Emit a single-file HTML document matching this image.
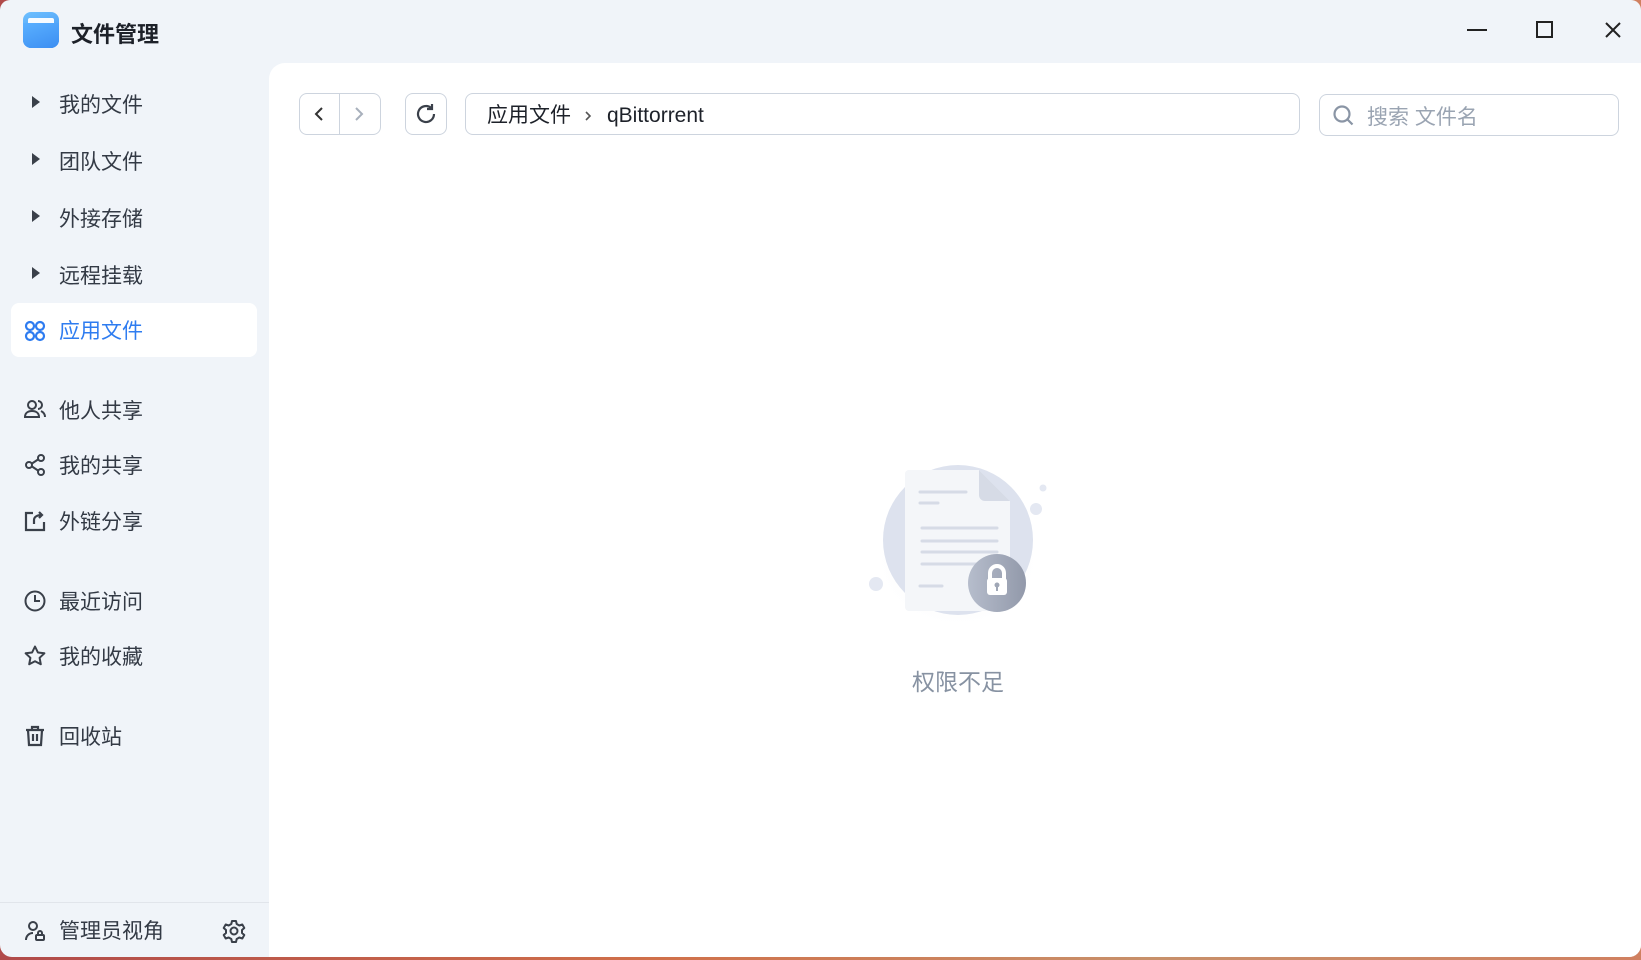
<!DOCTYPE html>
<html><head><meta charset="utf-8"><style>
*{box-sizing:border-box;margin:0;padding:0}
body{width:1641px;height:960px;overflow:hidden;background:linear-gradient(90deg,#b04a4a,#d0704a 40%,#c8906a 70%,#d08060);font-family:"Liberation Sans","Noto Sans CJK SC",sans-serif;position:relative}
.win{position:absolute;left:0;top:0;width:1641px;height:957px;background:#f0f4f9;border-radius:10px 10px 12px 12px;overflow:hidden}
.title{position:absolute;left:71px;top:17px;font-size:22px;font-weight:bold;color:#1d2129}
.logo{position:absolute;left:23px;top:12px;width:36px;height:36px;border-radius:8px;background:linear-gradient(160deg,#6ec0ff,#3d8ef0)}
.logo:before{content:"";position:absolute;left:5px;top:6px;width:26px;height:6px;background:#fff;border-radius:2px 2px 0 0;opacity:.95}
.logo:after{content:"";position:absolute;left:0;top:11px;width:36px;height:25px;border-radius:0 0 8px 8px;background:linear-gradient(160deg,#5ab0ff,#3c8ef2)}
.main{position:absolute;left:269px;top:63px;width:1372px;height:894px;background:#fff;border-radius:16px 0 0 0}
.item{position:absolute;left:59px;font-size:21px;color:#333a45;line-height:24px}
.ic{position:absolute;left:24px;width:22px;height:22px}
.tri{position:absolute;left:32px;width:0;height:0;border-left:8px solid #3a404a;border-top:6px solid transparent;border-bottom:6px solid transparent}
.active{position:absolute;left:11px;top:303px;width:246px;height:54px;background:#fff;border-radius:8px}
.btn{position:absolute;border:1px solid #cdd4de;border-radius:8px;background:#fff}
.wc{position:absolute;top:18px}
</style></head><body>
<div class="win">
<div class="logo"></div>
<div class="title">文件管理</div>
<svg class="wc" style="left:1465px" width="24" height="24"><line x1="2" y1="12" x2="22" y2="12" stroke="#222" stroke-width="2"/></svg>
<svg class="wc" style="left:1533px" width="24" height="24"><rect x="4" y="4" width="15" height="15" fill="none" stroke="#222" stroke-width="2"/></svg>
<svg class="wc" style="left:1601px" width="24" height="24"><path d="M5 5L19 19M19 5L5 19" stroke="#222" stroke-width="2"/></svg>

<div class="tri" style="top:96px"></div><div class="item" style="top:94px">我的文件</div>
<div class="tri" style="top:153px"></div><div class="item" style="top:151px">团队文件</div>
<div class="tri" style="top:210px"></div><div class="item" style="top:208px">外接存储</div>
<div class="tri" style="top:267px"></div><div class="item" style="top:265px">远程挂载</div>
<div class="active"></div>
<svg class="ic" style="top:320px" viewBox="0 0 22 22" fill="none" stroke="#2e7cf0" stroke-width="2.2"><circle cx="6" cy="6" r="4"/><circle cx="16" cy="6" r="4"/><circle cx="6" cy="16" r="4"/><circle cx="16" cy="16" r="4"/></svg>
<div class="item" style="top:320px;color:#2e7cf0">应用文件</div>

<svg class="ic" style="top:398px" viewBox="0 0 22 22" fill="none" stroke="#3a404a" stroke-width="2"><circle cx="8" cy="7" r="4"/><path d="M1 19c0-4 3-6 7-6s7 2 7 6z"/><path d="M14 3a4 4 0 010 8M17 13c2 1 4 3 4 6"/></svg>
<div class="item" style="top:400px">他人共享</div>
<svg class="ic" style="top:454px" viewBox="0 0 22 22" fill="none" stroke="#3a404a" stroke-width="2"><circle cx="17" cy="4" r="3"/><circle cx="5" cy="11" r="3"/><circle cx="17" cy="18" r="3"/><path d="M8 9.5l6-4M8 12.5l6 4"/></svg>
<div class="item" style="top:455px">我的共享</div>
<svg class="ic" style="top:510px" viewBox="0 0 22 22" fill="none" stroke="#3a404a" stroke-width="2.2"><path d="M9 3H2v17h18v-8"/><path d="M10 14l0-4c0-3 3-5 8-5M15 2l3 3-3 3"/></svg>
<div class="item" style="top:511px">外链分享</div>
<svg class="ic" style="top:590px" viewBox="0 0 22 22" fill="none" stroke="#3a404a" stroke-width="2"><circle cx="11" cy="11" r="9.5"/><path d="M11 5v6h5"/></svg>
<div class="item" style="top:591px">最近访问</div>
<svg class="ic" style="top:645px" viewBox="0 0 22 22" fill="none" stroke="#3a404a" stroke-width="2" stroke-linejoin="round"><path d="M11 1.5l2.9 6 6.5.8-4.8 4.5 1.2 6.5L11 16.2l-5.8 3.1 1.2-6.5L1.6 8.3l6.5-.8z"/></svg>
<div class="item" style="top:646px">我的收藏</div>
<svg class="ic" style="top:725px" viewBox="0 0 22 22" fill="none" stroke="#3a404a" stroke-width="2.2"><path d="M2 5h18M8 5V2h6v3M4 5l1 15h12l1-15M9 9v7M13 9v7"/></svg>
<div class="item" style="top:726px">回收站</div>

<div style="position:absolute;left:0;top:902px;width:269px;height:1px;background:#e1e5eb"></div>
<svg class="ic" style="top:920px" viewBox="0 0 22 22" fill="none" stroke="#3a404a" stroke-width="2"><circle cx="9" cy="6" r="4"/><path d="M2 20c0-4 3-7 7-7"/><rect x="12" y="15" width="8" height="5" rx="1"/><path d="M14 15v-2a2 2 0 014 0v2"/></svg>
<div class="item" style="top:920px">管理员视角</div>
<svg style="position:absolute;left:222px;top:919px" width="24" height="24" viewBox="0 0 24 24" fill="none" stroke="#3a404a" stroke-width="2"><circle cx="12" cy="12" r="3.5"/><path d="M10 2h4l.7 3 2.6 1.5 3-1 2 3.5-2.3 2v3l2.3 2-2 3.5-3-1-2.6 1.5-.7 3h-4l-.7-3-2.6-1.5-3 1-2-3.5 2.3-2v-3l-2.3-2 2-3.5 3 1L9.3 5z" stroke-linejoin="round"/></svg>

<div class="main">
<div class="btn" style="left:30px;top:30px;width:82px;height:42px"></div>
<div style="position:absolute;left:70px;top:31px;width:1px;height:40px;background:#cdd4de"></div>
<svg style="position:absolute;left:40px;top:41px" width="20" height="20"><path d="M13 4l-6 6 6 6" fill="none" stroke="#333" stroke-width="2"/></svg>
<svg style="position:absolute;left:80px;top:41px" width="20" height="20"><path d="M7 4l6 6-6 6" fill="none" stroke="#a8b0bc" stroke-width="2"/></svg>
<div class="btn" style="left:136px;top:30px;width:42px;height:42px"></div>
<svg style="position:absolute;left:145px;top:39px" width="24" height="24" viewBox="0 0 24 24" fill="none" stroke="#3a404a" stroke-width="2.2"><path d="M20 12a8 8 0 11-3-6.2"/><path d="M18 2v5h-5"/></svg>
<div class="btn" style="left:196px;top:30px;width:835px;height:42px"></div>
<div style="position:absolute;left:218px;top:32px;height:42px;display:flex;align-items:center;font-size:21px;color:#1d2129;line-height:42px">
<span>应用文件</span>
<svg style="margin:0 12px 0 12px" width="12" height="14"><path d="M3 3l4 4-4 4" fill="none" stroke="#555" stroke-width="1.6"/></svg>
<span>qBittorrent</span></div>
<div class="btn" style="left:1050px;top:31px;width:300px;height:42px"></div>
<svg style="position:absolute;left:1063px;top:41px" width="24" height="24" viewBox="0 0 24 24" fill="none" stroke="#8a95a5" stroke-width="2.2"><circle cx="10" cy="10" r="7.5"/><path d="M15.5 15.5l5 5"/></svg>
<div style="position:absolute;left:1098px;top:34px;height:42px;line-height:42px;font-size:21px;color:#9aa4b2">搜索 文件名</div>

<svg style="position:absolute;left:594px;top:327px" width="190" height="260" viewBox="0 0 190 260">
<defs><linearGradient id="lk" x1="0" x2="1"><stop offset="0" stop-color="#b6bdcc"/><stop offset="1" stop-color="#9299aa"/></linearGradient>
<radialGradient id="sh"><stop offset="0" stop-color="#e6e9ef"/><stop offset="1" stop-color="#fff" stop-opacity="0"/></radialGradient></defs>
<ellipse cx="95" cy="170" rx="85" ry="70" fill="url(#sh)"/>
<circle cx="95" cy="150" r="75" fill="#dde2ee"/>
<circle cx="180" cy="98" r="3.5" fill="#e4e8f2"/>
<circle cx="173" cy="119" r="6" fill="#e4e8f2"/>
<circle cx="13" cy="194" r="7" fill="#e4e8f2"/>
<path d="M46 80h70l31 31v106a4 4 0 01-4 4H46a4 4 0 01-4-4V84a4 4 0 014-4z" fill="#f4f6f9"/>
<path d="M116 80v25a6 6 0 006 6h25z" fill="#d6dbe6"/>
<g stroke="#d6dbe6" stroke-width="3" stroke-linecap="round"><path d="M57 102h46M57 113h18M59 138h75M59 151h75M59 162h75M59 174h60M57 196h22"/></g>
<circle cx="134" cy="193" r="29" fill="url(#lk)"/>
<path d="M127 189v-6a7 7 0 0114 0v6" fill="none" stroke="#fff" stroke-width="4"/>
<rect x="124" y="188" width="20" height="17" rx="3" fill="#fff"/>
<circle cx="134" cy="195" r="2.5" fill="#a0a7b6"/><rect x="133" y="196" width="2" height="5" fill="#a0a7b6"/>
</svg>
<div style="position:absolute;left:639px;top:600px;width:100px;text-align:center;font-size:23px;color:#8792a2">权限不足</div>
</div>
</div>
</body></html>
